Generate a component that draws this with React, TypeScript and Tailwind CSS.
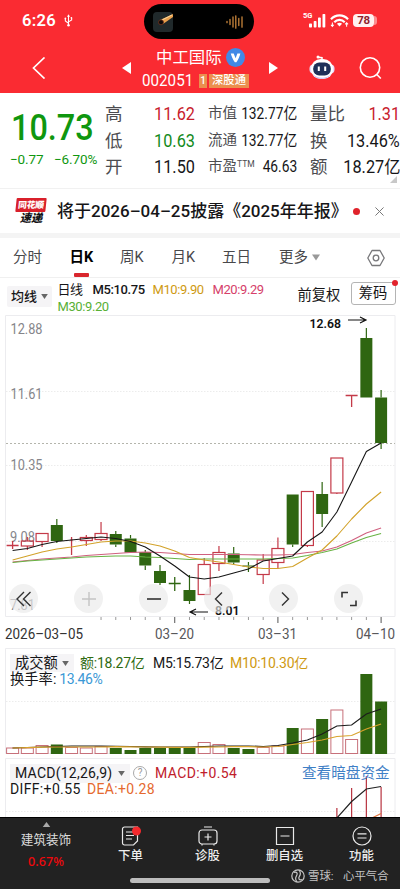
import type { ReactNode } from "react";

const STEP = 14.74;
const xAt = (i: number) => 12.6 + i * STEP;

// [body top, body bottom, high, low, rising]
const candles: [number, number, number, number, boolean][] = [
  [230.5, 230.5, 226, 234, true],
  [226, 231, 222, 235, true],
  [218.5, 226.5, 218.5, 232, true],
  [210, 226, 204, 228, false],
  [225, 225, 222, 240, true],
  [222.5, 225.5, 220, 231, true],
  [218.5, 224.5, 207, 226, true],
  [219, 229.5, 216, 232, false],
  [223.5, 237.5, 220, 237.5, false],
  [237, 250.5, 235, 255, false],
  [256, 268, 250, 270, false],
  [268.5, 268.5, 262, 276, false],
  [275, 286, 260, 289, false],
  [249.5, 279.5, 243, 279.5, true],
  [237.5, 248.5, 231, 256, true],
  [238.5, 247.5, 232, 249, false],
  [250.5, 251.5, 247, 257, false],
  [245, 259.5, 239, 269, true],
  [233.5, 247.5, 222.5, 253, true],
  [179.5, 229.5, 179.5, 232, false],
  [176.5, 230.5, 176.5, 232, true],
  [179, 199, 167, 212, false],
  [143, 178, 143, 179, true],
  [80.5, 80.5, 80.5, 92, true],
  [23, 82.5, 13, 82.5, false],
  [82.5, 128, 75, 134, false],
];

const m5 = [235.5, 233.5, 229.5, 226.5, 225, 223.5, 222, 223.5, 226.5, 232, 241, 251, 262, 264, 262, 258, 254, 246, 243.5, 241, 227, 217, 197, 167, 136.5, 128];
const m10 = [245, 241, 237, 234, 232, 229.5, 227, 226, 226, 228, 231, 236, 242.5, 245, 247, 249.5, 252, 253.5, 253.5, 251.5, 243, 235, 221, 204, 189, 177];
const m20 = [247, 245.5, 244, 243, 242, 240.5, 239.5, 238.5, 237.5, 237, 237.5, 238.5, 239.5, 239.5, 239.5, 239.5, 239.8, 240, 240, 239.5, 237.5, 236, 232, 225.5, 218, 213];
const m30 = [247.5, 246, 245, 244, 243, 242, 241.5, 241, 241, 242, 242.5, 243.5, 244.5, 244, 244, 244, 244, 244, 243.5, 243, 240.5, 237.5, 234, 228, 222.5, 218.5];

const volumes = [6, 6, 8.5, 9.5, 6.5, 6, 7.5, 6, 4, 6, 6, 6, 6, 11.5, 9.5, 6, 5, 6.5, 8, 26, 25, 35, 44, 14.5, 80, 52.5];
const v5 = [100, 99.5, 99, 98.5, 98, 98, 98, 98.3, 98.5, 98.8, 99, 99, 99, 98.5, 98, 98, 98, 98.5, 97.5, 95, 92, 86, 78, 77, 66, 61];
const v10 = [100, 99.6, 99.2, 99, 99, 99, 99, 98.6, 98.8, 99, 99.2, 99.3, 99.4, 99.2, 99, 98.7, 98.7, 99, 98.5, 96.5, 94.5, 92, 88.5, 87.5, 81, 76];

const points = (values: number[]) => values.map((y, i) => `${xAt(i)},${y}`).join(" ");

const GREEN = "#2f6611";
const RED = "#c43a48";

function Caret({ className }: { className: string }) {
  return (
    <svg viewBox="0 0 8 6" className={className} aria-hidden="true">
      <path d="M0 0h8L4 6z" fill="currentColor" />
    </svg>
  );
}

function StatusBar() {
  return (
    <div className="flex h-[43px] items-start text-white">
      <span className="ml-[22px] mt-[11px] w-[40px] text-[16.5px] leading-5 font-semibold tracking-[0.3px]">6:26</span>
      <svg viewBox="0 0 10 14" className="ml-[2px] mt-[14px] h-[13px] w-[9px]" fill="none" stroke="currentColor" strokeWidth="1.2">
        <path d="M5 2v10M5 10L1.5 7.5V5M5 8.5l3.500-2V4" />
        <path d="M5 0L3.300 2.800h3.400z" fill="currentColor" stroke="none" />
        <circle cx="5" cy="12.300" r="1.400" fill="currentColor" stroke="none" />
        <circle cx="1.500" cy="4.800" r="1" fill="currentColor" stroke="none" />
        <path d="M7.400 3.200h1.600v1.600H7.400z" fill="currentColor" stroke="none" />
      </svg>
      <div className="ml-[71px] mt-1 flex h-[35px] w-[110px] items-center justify-between rounded-full bg-black pr-[11px] pl-[9px]">
        <svg viewBox="0 0 20 20" className="h-5 w-5">
          <rect width="20" height="20" rx="4" fill="#20292b" />
          <path d="M7 8l13-6v3L10 12z" fill="#e9a04c" />
          <path d="M9 8l10-5" stroke="#fbd9a0" strokeWidth="1" />
          <circle cx="8" cy="10.300" r="2.500" fill="#0b0808" stroke="#75341d" strokeWidth=".8" />
        </svg>
        <svg viewBox="0 0 17 14" className="h-[14px] w-[17px]" stroke="#c8853c" strokeWidth="1.300" strokeLinecap="round">
          <path d="M1 6.300v1.400M4 4.500v5M7 2v10M9.800 .8v12.400M12.800 3.500v7M16 1.800v10.400" />
        </svg>
      </div>
      <span className="ml-[49px] mt-[11px] w-[10px] text-[7.5px] leading-[10px] font-bold">5G</span>
      <svg viewBox="0 0 18 14" className="-ml-[4px] mt-[14px] h-[14px] w-[18px]" fill="currentColor">
        <rect x="0" y="9.500" width="3" height="4" rx=".7" />
        <rect x="4.700" y="7" width="2.800" height="6.500" rx=".7" />
        <rect x="9" y="3.500" width="2.800" height="10" rx=".7" />
        <rect x="13.500" y="0" width="2.800" height="13.500" rx=".7" />
      </svg>
      <svg viewBox="0 0 20 15" className="ml-[3px] mt-[13px] h-[15px] w-[19px]" fill="none" stroke="currentColor" strokeWidth="2.200">
        <path d="M1 6.200C6 .8 14 .8 19 6.200M4.500 9.300c3-3.300 8-3.300 11 0" />
        <path d="M10 13.800L7.300 11c1.500-1.400 3.900-1.400 5.400 0z" fill="currentColor" stroke="none" />
        <path d="M2.500 9.500v4M1 12l1.500 1.700L4 12M17.500 14v-4M16 11.500l1.500-1.700 1.500 1.700" strokeWidth="1.100" />
      </svg>
      <div className="ml-[4px] mt-[14px] flex h-[13px] w-[21px] items-center justify-center rounded-[4px] bg-[#fff0f0] text-[11.5px] leading-none font-bold tracking-[-0.3px] text-[#8e1d2b]">
        78
      </div>
      <div className="mt-[16px] h-[9px] w-[3px] rounded-r-full bg-[#fc8d90]" />
    </div>
  );
}

function TitleBar() {
  return (
    <div className="flex h-[50px] text-white">
      <svg viewBox="0 0 14 22" className="ml-[32px] mt-[14px] h-[22px] w-[14px]" fill="none" stroke="currentColor" strokeWidth="1.700">
        <path d="M12.500 .5L1.500 11l11 10.500" />
      </svg>
      <svg viewBox="0 0 9 12" className="ml-[76px] mt-[19px] h-3 w-[9px]" fill="currentColor">
        <path d="M9 0v12L0 6z" />
      </svg>
      <div className="ml-[11px] flex w-[108px] flex-col">
        <div className="mt-[4px] flex h-[21px] items-center pl-[14px]">
          <span className="w-[66px] text-[16.4px] leading-[21px] whitespace-nowrap">中工国际</span>
          <svg viewBox="0 0 20 20" className="ml-[4px] h-[19px] w-[19px] shrink-0">
            <circle cx="10" cy="10" r="10" fill="#4189e6" />
            <path d="M5 5.700h3.100l2 5 1.900-5h3.100c-.7 3-2.200 6.500-4.200 9.400H9.300C7.300 12.200 5.900 9 5 5.700z" fill="#fff" />
          </svg>
        </div>
        <div className="mt-[5px] flex h-[16px] items-center">
          <span className="w-[57px] origin-left scale-x-[0.92] text-[16.5px] leading-4">002051</span>
          <span className="flex h-[14px] w-[8px] shrink-0 items-center justify-center bg-[#eb8f4e] text-[10px] leading-none font-medium">1</span>
          <span className="ml-[2px] flex h-[14px] w-[40px] shrink-0 items-center justify-center bg-[#eb8f4e] text-[11.3px] leading-none font-medium whitespace-nowrap">
            深股通
          </span>
        </div>
      </div>
      <svg viewBox="0 0 9 12" className="ml-[19px] mt-[19px] h-3 w-[9px]" fill="currentColor">
        <path d="M0 0v12l9-6z" />
      </svg>
      <svg viewBox="0 0 26 25" className="ml-[31px] mt-[12px] h-[25px] w-[26px]">
        <path d="M9 2.200l4 .5v2.500" fill="none" stroke="#fff" strokeWidth="1.500" />
        <circle cx="9" cy="2" r="1.500" fill="#fff" />
        <rect x=".5" y="9.500" width="25" height="9" rx="4" fill="#e8dcfb" />
        <rect x="2" y="4" width="22" height="20" rx="9.800" fill="#fff" />
        <path d="M4 19c4 5 14 5 18 0-2 6-16 7-18 0z" fill="#cfc4f5" />
        <rect x="4.200" y="7.500" width="17.600" height="13" rx="6" fill="#1f3059" />
        <path d="M9.800 11.500v4.500M16.200 11.500v4.500" stroke="#fff" strokeWidth="2" />
      </svg>
      <svg viewBox="0 0 24 24" className="ml-[24px] mt-[13px] h-6 w-6" fill="none" stroke="currentColor" strokeWidth="1.600">
        <circle cx="11" cy="11.500" r="9.700" />
        <path d="M17.800 18.500l4 4" />
      </svg>
    </div>
  );
}

function QuoteRow({ label, children }: { label: ReactNode; children: ReactNode }) {
  return (
    <div className="flex h-[26.5px] items-center justify-between whitespace-nowrap">
      <span className="text-[#4c4c50]">{label}</span>
      {children}
    </div>
  );
}

function Quotes() {
  const big = "origin-right scale-x-[0.93] text-[17.5px]";
  const small = "origin-right scale-x-[0.86] text-[16px]";
  return (
    <section className="relative flex h-[95px] pt-[8px]">
      <div className="w-[105px] shrink-0 text-[#0f970f]">
        <div className="mt-[8px] ml-[11px] origin-left scale-x-[0.9] text-[36px] leading-[38px] font-medium">10.73</div>
        <div className="ml-[10px] mt-[3px] flex text-[13.5px] leading-[18px] tracking-[-0.1px] whitespace-nowrap">
          <span className="w-[44px]">−0.77</span>
          <span>−6.70%</span>
        </div>
      </div>
      <div className="w-[90px] shrink-0 text-[17.5px]">
        <QuoteRow label="高"><span className={`${big} text-[#c8202c]`}>11.62</span></QuoteRow>
        <QuoteRow label="低"><span className={`${big} text-[#138a1b]`}>10.63</span></QuoteRow>
        <QuoteRow label="开"><span className={big}>11.50</span></QuoteRow>
      </div>
      <div className="ml-[13px] w-[89px] shrink-0 text-[14.5px]">
        <QuoteRow label="市值"><span className={`${small} -ml-2`}>132.77亿</span></QuoteRow>
        <QuoteRow label="流通"><span className={`${small} -ml-2`}>132.77亿</span></QuoteRow>
        <QuoteRow label={<>市盈<sup className="-top-[4px] text-[8.5px]">TTM</sup></>}>
          <span className={small}>46.63</span>
        </QuoteRow>
      </div>
      <div className="ml-[13px] w-[90px] shrink-0 text-[17.5px]">
        <QuoteRow label="量比"><span className={`${big} text-[#c8202c]`}>1.31</span></QuoteRow>
        <QuoteRow label="换"><span className={big}>13.46%</span></QuoteRow>
        <QuoteRow label="额"><span className={big}>18.27亿</span></QuoteRow>
      </div>
      <svg viewBox="0 0 7 7" className="absolute right-[3px] bottom-[5px] h-[7px] w-[7px]">
        <path d="M7 0v7H0z" fill="#c8c8c8" />
      </svg>
    </section>
  );
}

function NewsBar() {
  return (
    <section className="flex h-[45px] items-center border-t border-[#f1f1f1]">
      <div className="ml-[15px] flex h-[27px] w-[32px] shrink-0 flex-col items-center">
        <div className="flex h-[14px] w-[30px] -skew-x-6 items-center justify-center rounded-[1px] bg-[#d9202b] text-[8.8px] leading-none font-black tracking-[-0.2px] whitespace-nowrap text-white">
          同花顺
        </div>
        <div className="mt-px text-[11.300px] leading-3 font-black italic">速递</div>
      </div>
      <p className="ml-[10px] w-[286px] text-[17px] leading-6 font-medium whitespace-nowrap">
        将于2026–04–25披露《2025年年报》
      </p>
      <span className="ml-[10px] h-[7px] w-[7px] shrink-0 rounded-full bg-[#e0232b]" />
      <svg viewBox="0 0 10 10" className="ml-[15px] h-[9px] w-[9px]" stroke="#777" strokeWidth="1.100">
        <path d="M.5 .5l9 9M9.500 .5l-9 9" />
      </svg>
    </section>
  );
}

function Tabs() {
  return (
    <nav className="flex h-[40px] items-center border-b border-[#f0f0f0] text-[14.5px] leading-5 whitespace-nowrap text-[#48484b]">
      <span className="ml-[13px] w-[56.500px]">分时</span>
      <span className="relative w-[50.500px] font-bold text-black">
        日K
        <span className="absolute -bottom-[9px] left-[4.500px] h-[3.500px] w-[14.500px] rounded-[1px] bg-[#d9262d]" />
      </span>
      <span className="w-[51.500px]">周K</span>
      <span className="w-[50.500px]">月K</span>
      <span className="w-[57px]">五日</span>
      <span>更多</span>
      <Caret className="ml-[4px] h-[7px] w-[8px] text-[#999]" />
      <svg viewBox="0 0 18 18" className="ml-[47px] h-[18px] w-[18px]" fill="none" stroke="#77777a" strokeWidth="1.300">
        <path d="M5 1.500h8L17.200 9 13 16.500H5L.8 9z" strokeLinejoin="round" />
        <circle cx="9" cy="9" r="2.800" />
      </svg>
    </nav>
  );
}

function AverageLegend() {
  return (
    <div className="flex h-[37px] text-[13px]">
      <button className="ml-[7px] mt-[8px] flex h-[21px] w-[45px] shrink-0 items-center rounded-[2px] bg-[#f5f4f6] pl-[4px] text-[13px] leading-none font-medium whitespace-nowrap">
        均线
        <Caret className="ml-[4px] h-[5px] w-[7px] text-[#666]" />
      </button>
      <div className="ml-[5.500px] mt-[4px] flex w-[236px] flex-wrap text-[13px] leading-4 tracking-[-0.4px] whitespace-nowrap">
        <span className="w-[35px]">日线</span>
        <span className="w-[60px] font-medium">M5:10.75</span>
        <span className="w-[60px] text-[#cf9a12]">M10:9.90</span>
        <span className="w-[60px] text-[#d6416a]">M20:9.29</span>
        <span className="w-[60px] text-[#58b035]">M30:9.20</span>
      </div>
      <span className="mt-[7px] ml-[4px] w-[44px] text-[14.300px] leading-5 whitespace-nowrap">前复权</span>
      <button className="relative ml-[9px] mt-[4px] flex h-[23px] w-[45px] items-center justify-center rounded-[3px] border border-[#b4b4b4] text-[14.300px] leading-none whitespace-nowrap">
        筹码
        <span className="absolute -top-[3px] -right-[3px] h-[6px] w-[6px] rounded-full bg-[#e2232c]" />
      </button>
    </div>
  );
}

function ToolButton({ className, children }: { className?: string; children: ReactNode }) {
  return (
    <button className={`flex h-[29px] w-[29px] items-center justify-center rounded-full bg-[#e9e9e9]/65 ${className ?? "text-[#333]"}`}>
      <svg viewBox="0 0 18 18" className="h-[18px] w-[18px]" fill="none" stroke="currentColor" strokeWidth="1.400">
        {children}
      </svg>
    </button>
  );
}

function PriceChart() {
  return (
    <section className="relative h-[333px]">
      <svg viewBox="0 0 400 333" className="block h-[333px] w-[400px] font-[Roboto]">
        <path d="M5.500 301.500V.5h389.500v301z" fill="none" stroke="#ececef" />
        <path d="M6 76.500h389M6 150.500h389M6 226.500h389" stroke="#ececec" strokeDasharray="1.500 1.500" />
        <path d="M6 128.500h389" stroke="#b4b5ac" strokeDasharray="2 2" />
        <g fontSize="14" fill="#85858a">
          <text x="10.500" y="18.500" textLength="32" lengthAdjust="spacingAndGlyphs">12.88</text>
          <text x="10.500" y="83.500" textLength="32" lengthAdjust="spacingAndGlyphs">11.61</text>
          <text x="10.500" y="154.500" textLength="32" lengthAdjust="spacingAndGlyphs">10.35</text>
          <text x="10" y="226.500" textLength="25" lengthAdjust="spacingAndGlyphs">9.08</text>
          <text x="10" y="295" textLength="25" lengthAdjust="spacingAndGlyphs">7.81</text>
        </g>
        {candles.map(([top, bottom, high, low, up], i) => {
          const x = xAt(i);
          const color = up ? RED : GREEN;
          if (top === bottom) {
            const half = i === 4 ? 1 : 6;
            return (
              <path key={i} d={`M${x - half} ${top}h${half * 2}M${x} ${high}V${low}`} stroke={color} strokeWidth="1.300" />
            );
          }
          return (
            <g key={i} stroke={color} strokeWidth="1.200">
              <path d={`M${x} ${high}V${top}M${x} ${bottom}V${low}`} />
              {up ? (
                <rect x={x - 6} y={top} width="12" height={bottom - top} fill="none" />
              ) : (
                <rect x={x - 6} y={top} width="12" height={bottom - top} fill={GREEN} stroke="none" />
              )}
            </g>
          );
        })}
        <g fill="none" strokeWidth="1.100" strokeLinejoin="round">
          <polyline points={points(m20)} stroke="#d0607f" />
          <polyline points={points(m30)} stroke="#68b344" />
          <polyline points={points(m10)} stroke="#d2a22a" />
          <polyline points={points(m5)} stroke="#161616" />
        </g>
        <g fontSize="12.500" fontWeight="600" fill="#111">
          <text x="309.500" y="13" textLength="31.500" lengthAdjust="spacingAndGlyphs">12.68</text>
          <text x="215" y="300" textLength="24.500" lengthAdjust="spacingAndGlyphs">8.01</text>
        </g>
        <path d="M348 5h18M360 2l6 3-6 3M208 297h-18M196 294l-6 3 6 3" fill="none" stroke="#111" strokeWidth="1.200" />
        {candles.map((_, i) =>
          i < 6 ? null : (
            <path key={i} d={`M${xAt(i)} 302v${i % 7 === 4 ? 6 : 3}`} stroke={i % 7 === 4 ? "#555" : "#999"} />
          ),
        )}
        <g fontSize="14.300" fill="#58585b">
          <text x="5" y="323.500" fill="#333" textLength="78" lengthAdjust="spacingAndGlyphs">2026–03–05</text>
          <text x="155" y="323.500" textLength="39" lengthAdjust="spacingAndGlyphs">03–20</text>
          <text x="258" y="323.500" textLength="39" lengthAdjust="spacingAndGlyphs">03–31</text>
          <text x="356" y="323.500" textLength="39" lengthAdjust="spacingAndGlyphs">04–10</text>
        </g>
      </svg>
      <div className="absolute top-[269px] left-[9px] flex gap-[36px]">
        <ToolButton><path d="M9 2L2 9l7 7M15.500 2l-7 7 7 7" /></ToolButton>
        <ToolButton className="text-[#c4c4c4]"><path d="M2 9h14M9 2v14" /></ToolButton>
        <ToolButton><path d="M2 9h14" strokeWidth="1.600" /></ToolButton>
        <ToolButton><path d="M12 2.500L5.500 9l6.500 6.500" /></ToolButton>
        <ToolButton><path d="M7 2.500L13.500 9 7 15.500" /></ToolButton>
        <ToolButton><path d="M2 7.500V2.500h6M16 10.500v5h-6" strokeWidth="1.600" /></ToolButton>
      </div>
    </section>
  );
}

function VolumePanel() {
  return (
    <section className="relative h-[110px]">
      <svg viewBox="0 0 400 110" className="absolute inset-0 h-[110px] w-[400px]">
        <path d="M5.500 105.500V.5h389.500v105z" fill="none" stroke="#ececef" />
        <path d="M6 53.500h389" stroke="#ececec" strokeDasharray="1.500 1.500" />
        {volumes.map((h, i) =>
          candles[i][4] ? (
            <rect key={i} x={xAt(i) - 6} y={106 - h} width="12" height={h - 0.5} fill="#fff" stroke="#c7707a" />
          ) : (
            <rect key={i} x={xAt(i) - 6} y={106 - h} width="12" height={h} fill={GREEN} />
          ),
        )}
        <g fill="none" strokeWidth="1.200">
          <polyline points={points(v5)} stroke="#1c1c1c" />
          <polyline points={points(v10)} stroke="#d8a32c" />
        </g>
      </svg>
      <div className="relative flex h-[24px] items-center pt-[6px] pl-[10px] text-[14px] leading-[18px] tracking-[-0.25px] whitespace-nowrap">
        <button className="flex h-[18px] w-[64px] items-center bg-[#f5f4f6] pl-[5px] text-[14.300px] leading-none tracking-normal">
          成交额
          <Caret className="ml-[4px] h-[5px] w-[7px] text-[#666]" />
        </button>
        <span className="ml-[6px] w-[73px] text-[#2f6b12]">额:18.27亿</span>
        <span className="w-[77px]">M5:15.73亿</span>
        <span className="text-[#cf9a12]">M10:10.30亿</span>
      </div>
      <div className="relative pl-[10px] text-[14.300px] leading-[15px] whitespace-nowrap">
        换手率:<span className="ml-[3px] text-[14px] tracking-[-0.400px] text-[#3a98d6]">13.46%</span>
      </div>
    </section>
  );
}

function MacdPanel() {
  return (
    <section className="relative h-[59px] overflow-hidden">
      <svg viewBox="0 0 400 59" className="absolute inset-0 h-[59px] w-[400px]" fill="none">
        <path d="M5.500 60V.5h389.500V60" stroke="#ececef" />
        <path d="M6 53.500h389" stroke="#ececec" strokeDasharray="1.500 1.500" />
        <path d={`M${xAt(22)} 50v10M${xAt(23)} 30v30M${xAt(24)} 18v42M${xAt(25)} 29v31`} stroke="#b83440" strokeWidth="1.200" />
        <path d={`M${xAt(22)} 60L${xAt(23)} 43.500 ${xAt(24)} 31 ${xAt(25)} 28.500`} stroke="#222" strokeWidth="1.200" />
        <path d={`M372 60L${xAt(25)} 55.500`} stroke="#e07740" strokeWidth="1.200" />
      </svg>
      <div className="relative flex h-[24px] items-center pt-[6px] pl-[10px] text-[14px] leading-[18px] whitespace-nowrap">
        <button className="flex h-[19px] w-[120px] items-center bg-[#f5f4f6] pl-[5px] leading-none">
          <span className="w-[99px] text-left tracking-[0.250px]">MACD(12,26,9)</span>
          <Caret className="ml-[4px] h-[5px] w-[7px] text-[#666]" />
        </button>
        <span className="ml-[3px] flex h-[14px] w-[14px] items-center justify-center rounded-full border border-[#aaa] text-[10px] leading-none text-[#999]">?</span>
        <span className="ml-[8px] w-[147px] tracking-[0.400px] text-[#c0202b]">MACD:+0.54</span>
        <span className="text-[14.600px] text-[#3f80c6]">查看暗盘资金</span>
      </div>
      <div className="relative flex pl-[10px] text-[14px] leading-[15px] tracking-[0.350px]">
        <span className="w-[77px]">DIFF:+0.55</span>
        <span className="text-[#e5692f]">DEA:+0.28</span>
      </div>
    </section>
  );
}

function Action({ label, children }: { label: string; children: ReactNode }) {
  return (
    <div className="flex w-[77px] flex-col items-center">
      <svg viewBox="0 0 20 20" className="mt-[8px] h-5 w-5" fill="none" stroke="#e9e9e9" strokeWidth="1.200">
        {children}
      </svg>
      <span className="mt-px text-[12.400px] leading-[18px] font-medium whitespace-nowrap text-[#eee]">{label}</span>
    </div>
  );
}

function BottomBar() {
  return (
    <footer className="relative flex h-[72px] border-t border-black bg-[#222]">
      <div className="flex w-[92px] flex-col items-center">
        <svg viewBox="0 0 9 6" className="mt-[4px] h-[5px] w-[9px]"><path d="M4.500 0L9 6H0z" fill="#aaa" /></svg>
        <span className="mt-[4px] text-[12.600px] leading-[18px] whitespace-nowrap text-[#ddd]">建筑装饰</span>
        <span className="mt-[4px] font-['Noto_Sans'] text-[12.600px] leading-[18px] font-medium text-[#f0080c]">0.67%</span>
      </div>
      <Action label="下单">
        <path d="M3.500 1h13v14l-4 4h-9a2 2 0 0 1-2-2V3a2 2 0 0 1 2-2zM5 6h10M5 9.500h8M5 13h6" />
        <circle cx="15.500" cy="5" r="4.500" fill="#f42a2e" stroke="none" />
      </Action>
      <Action label="诊股">
        <path d="M6 1h8M4 4h12a3 3 0 0 1 3 3v8a3 3 0 0 1-3 3H4a3 3 0 0 1-3-3V7a3 3 0 0 1 3-3zM10 7.500v7M6.500 11h7M4 18v1.500M16 18v1.500" />
      </Action>
      <Action label="删自选">
        <path d="M1.500 1.500h17v17h-17zM5.500 10h9" />
      </Action>
      <Action label="功能">
        <circle cx="10" cy="10" r="9" />
        <path d="M5.500 7.800h9M5.500 12h9" />
      </Action>
      <div className="absolute top-[60px] left-[130px] h-[5px] w-[140px] rounded-full bg-[#bdbdbd]" />
      <div className="absolute top-[50px] left-[291px] flex items-center text-[11.400px] leading-4 whitespace-nowrap text-[#c6c6c6]">
        <svg viewBox="0 0 14 14" className="mr-[3px] h-[14px] w-[14px]" fill="none" stroke="currentColor" strokeWidth="1.200">
          <circle cx="7" cy="7" r="6.200" />
          <path d="M3 3.500c3-1 4 1 2.500 3.300S4.500 11 6 13M11 10.500c-3 1-4-1-2.500-3.300S9.500 3 8 1" />
        </svg>
        <span className="w-[35px]">雪球:</span>
        <span>心平气合</span>
      </div>
    </footer>
  );
}

export default function App() {
  return (
    <main className="h-[889px] w-[400px] overflow-hidden bg-white font-[Roboto,'Noto_Sans_CJK_SC',sans-serif] text-[#161618]">
      <header className="h-[93px] bg-[#fa2b32]">
        <StatusBar />
        <TitleBar />
      </header>
      <Quotes />
      <NewsBar />
      <div className="h-[5px] bg-[#f4f4f4]" />
      <Tabs />
      <AverageLegend />
      <PriceChart />
      <VolumePanel />
      <MacdPanel />
      <BottomBar />
    </main>
  );
}
